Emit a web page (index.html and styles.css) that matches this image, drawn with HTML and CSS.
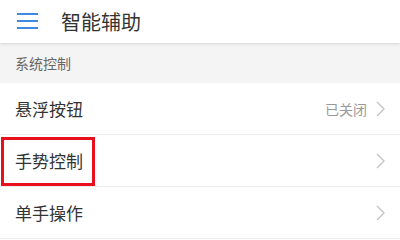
FILE: index.html
```html
<!DOCTYPE html>
<html lang="zh">

<head>
    <meta charset="UTF-8">
    <meta name="viewport" content="width=device-width, initial-scale=1.0">
    <title>智能辅助</title>
    <link rel="stylesheet" href="styles.css">
</head>

<body>
    <div class="header">
        <div class="menu-icon">
            <span></span>
            <span></span>
            <span></span>
        </div>
        <h1 class="title">智能辅助</h1>
    </div>

    <div class="section-title">系统控制</div>

    <div class="list">
        <div class="row">
            <span class="label">悬浮按钮</span>
            <span class="value">已关闭</span>
            <svg class="chevron" width="9" height="16" viewBox="0 0 9 16">
                <path d="M1 1 L8 8 L1 15" fill="none" stroke="#c4c4c4" stroke-width="1.4" />
            </svg>
        </div>
        <div class="row highlighted">
            <span class="label">手势控制</span>
            <svg class="chevron" width="9" height="16" viewBox="0 0 9 16">
                <path d="M1 1 L8 8 L1 15" fill="none" stroke="#c4c4c4" stroke-width="1.4" />
            </svg>
            <div class="mark"></div>
        </div>
        <div class="row">
            <span class="label">单手操作</span>
            <svg class="chevron" width="9" height="16" viewBox="0 0 9 16">
                <path d="M1 1 L8 8 L1 15" fill="none" stroke="#c4c4c4" stroke-width="1.4" />
            </svg>
        </div>
    </div>
</body>

</html>
```

FILE: styles.css
```css
* {
    box-sizing: border-box;
}

body {
    margin: 0;
    width: 400px;
    height: 240px;
    overflow: hidden;
    background-color: #ffffff;
    font-family: "Noto Sans CJK SC", "Noto Sans", sans-serif;
    color: #333333;
}

.header {
    height: 43px;
    display: flex;
    align-items: center;
    background-color: #ffffff;
    box-shadow: 0 1px 3px rgba(0, 0, 0, 0.12);
    position: relative;
    z-index: 1;
}

.menu-icon {
    width: 21px;
    margin-left: 17px;
    margin-top: -2px;
    display: flex;
    flex-direction: column;
    gap: 5px;
}

.menu-icon span {
    display: block;
    height: 2px;
    background-color: #3d8ae0;
}

.title {
    margin: 0 0 0 23px;
    font-size: 20px;
    font-weight: 400;
    line-height: 1;
    color: #333333;
}

.section-title {
    height: 40px;
    padding: 0 15px;
    display: flex;
    align-items: center;
    background-color: #f4f4f4;
    font-size: 14px;
    color: #666666;
}

.row {
    position: relative;
    height: 52px;
    display: flex;
    align-items: center;
    padding: 0 15px;
    border-bottom: 1px solid #ececec;
}

.label {
    flex: 1;
    font-size: 17px;
    color: #333333;
}

.value {
    font-size: 14px;
    color: #999999;
    margin-right: 9px;
}

.chevron {
    display: block;
}

.mark {
    position: absolute;
    left: 1px;
    top: 2px;
    width: 94px;
    height: 49px;
    border: 3px solid #e8101c;
}
```
